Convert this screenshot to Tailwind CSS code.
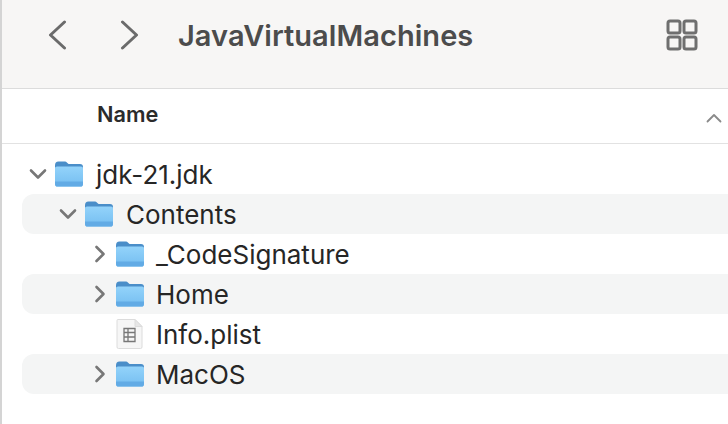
<!DOCTYPE html>
<html>
<head>
<meta charset="utf-8">
<script src="https://cdn.jsdelivr.net/npm/@tailwindcss/browser@4"></script>
</head>
<body class="m-0 overflow-hidden bg-white">
<svg width="0" height="0" class="absolute">
  <defs>
    <linearGradient id="fb" x1="0" y1="0" x2="0" y2="1"><stop offset="0" stop-color="#93d3fa"/><stop offset="1" stop-color="#74bdf1"/></linearGradient>
    <symbol id="folder" viewBox="0 0 30 28">
      <path d="M1 5.500C1 3 2.200 1.500 4.500 1.500h6.500c1.600 0 2.200 1.600 3.600 2.500h11.400C28 4 29 5.200 29 7v6H1z" fill="#4a8ec9"/>
      <path d="M1 8.500C1 7.300 1.800 6.600 3 6.600h24c1.200 0 2 .7 2 1.900v15.500c0 1.700-1 2.600-2.600 2.600H3.600C2 26.600 1 25.700 1 24z" fill="url(#fb)"/>
      <path d="M1 21.500h28V24c0 1.700-1 2.600-2.600 2.600H3.600C2 26.600 1 25.700 1 24z" fill="#62abe5"/>
    </symbol>
    <symbol id="down" viewBox="0 0 18 12"><path d="M2 2.500l7 7 7-7" fill="none" stroke="#777" stroke-width="2.600" stroke-linecap="round" stroke-linejoin="round"/></symbol>
    <symbol id="right" viewBox="0 0 12 18"><path d="M2.500 2l7 7-7 7" fill="none" stroke="#777" stroke-width="2.600" stroke-linecap="round" stroke-linejoin="round"/></symbol>
  </defs>
</svg>
<div class="w-[728px] h-[424px] flex flex-col border-l-2 border-[#d4d4d4] font-['Inter','Liberation_Sans',sans-serif] bg-white overflow-hidden">
  <div class="h-[89px] shrink-0 bg-[#f7f6f5] border-b border-[#dcdcdc] flex items-center pb-[19px] pl-[45px] pr-[30px]">
    <svg width="20" height="30" viewBox="0 0 20 30" class="shrink-0"><path d="M17.500 2L3.500 15l14 13" fill="none" stroke="#6b6b6b" stroke-width="3" stroke-linecap="round" stroke-linejoin="round"/></svg>
    <svg width="20" height="30" viewBox="0 0 20 30" class="shrink-0 ml-[53px]"><path d="M2.500 2l14 13-14 13" fill="none" stroke="#6b6b6b" stroke-width="3" stroke-linecap="round" stroke-linejoin="round"/></svg>
    <span class="ml-[38px] text-[29px] leading-none font-semibold text-[#4c4c4c] mt-[2px] tracking-[0.05px]">JavaVirtualMachines</span>
    <svg width="32" height="32" viewBox="0 0 32 32" class="ml-auto shrink-0" fill="none" stroke="#6f6f6f" stroke-width="3"><rect x="2" y="2" width="12" height="12" rx="2"/><rect x="18" y="2" width="12" height="12" rx="2"/><rect x="2" y="18" width="12" height="12" rx="2"/><rect x="18" y="18" width="12" height="12" rx="2"/></svg>
  </div>
  <div class="h-[55px] shrink-0 border-b border-[#e2e2e2] flex items-center pl-[95px] pr-[6px]">
    <span class="text-[21.700px] leading-none font-semibold text-[#2b2b2b] mb-[3px]">Name</span>
    <svg width="16" height="10" viewBox="0 0 16 10" class="ml-auto mt-[4px]"><path d="M1.500 8.500L8 2l6.500 6.500" fill="none" stroke="#8a8a8a" stroke-width="1.800" stroke-linecap="round" stroke-linejoin="round"/></svg>
  </div>
  <div class="pt-[10px] pl-[20px] flex flex-col text-[26px] leading-none text-[#262626]">
    <div class="h-[40px] flex items-center rounded-l-[12px]">
      <svg width="18" height="12" class="ml-[7px] shrink-0"><use href="#down"/></svg>
      <svg width="30" height="28" class="ml-[7px] shrink-0"><use href="#folder"/></svg>
      <span class="ml-[12px] mt-[2px]">jdk-21.jdk</span>
    </div>
    <div class="h-[40px] flex items-center rounded-l-[12px] bg-[#f4f5f5]">
      <svg width="18" height="12" class="ml-[37px] shrink-0"><use href="#down"/></svg>
      <svg width="30" height="28" class="ml-[7px] shrink-0"><use href="#folder"/></svg>
      <span class="ml-[12px] mt-[2px]">Contents</span>
    </div>
    <div class="h-[40px] flex items-center rounded-l-[12px]">
      <svg width="12" height="18" class="ml-[72px] shrink-0"><use href="#right"/></svg>
      <svg width="30" height="28" class="ml-[9px] shrink-0"><use href="#folder"/></svg>
      <span class="ml-[11px] mt-[2px]">_CodeSignature</span>
    </div>
    <div class="h-[40px] flex items-center rounded-l-[12px] bg-[#f4f5f5]">
      <svg width="12" height="18" class="ml-[72px] shrink-0"><use href="#right"/></svg>
      <svg width="30" height="28" class="ml-[9px] shrink-0"><use href="#folder"/></svg>
      <span class="ml-[11px] mt-[2px]">Home</span>
    </div>
    <div class="h-[40px] flex items-center rounded-l-[12px]">
      <svg width="30" height="32" viewBox="0 0 30 32" class="ml-[93px] shrink-0">
        <path d="M3 1.500h17l7 7V29a1.500 1.500 0 0 1-1.500 1.500h-22A1.500 1.500 0 0 1 2 29V2.500a1 1 0 0 1 1-1z" fill="#f6f6f6" stroke="#dcdcdc"/>
        <path d="M20 1.500V8.500h7z" fill="#e6e6e6" stroke="#dcdcdc"/>
        <path d="M9 10.500h11v13H9zM9 14.500h11M9 19h11M13 10.500v13" fill="none" stroke="#777" stroke-width="1.300"/>
      </svg>
      <span class="ml-[11px] mt-[2px]">Info.plist</span>
    </div>
    <div class="h-[40px] flex items-center rounded-l-[12px] bg-[#f4f5f5]">
      <svg width="12" height="18" class="ml-[72px] shrink-0"><use href="#right"/></svg>
      <svg width="30" height="28" class="ml-[9px] shrink-0"><use href="#folder"/></svg>
      <span class="ml-[11px] mt-[2px]">MacOS</span>
    </div>
  </div>
</div>
</body>
</html>
